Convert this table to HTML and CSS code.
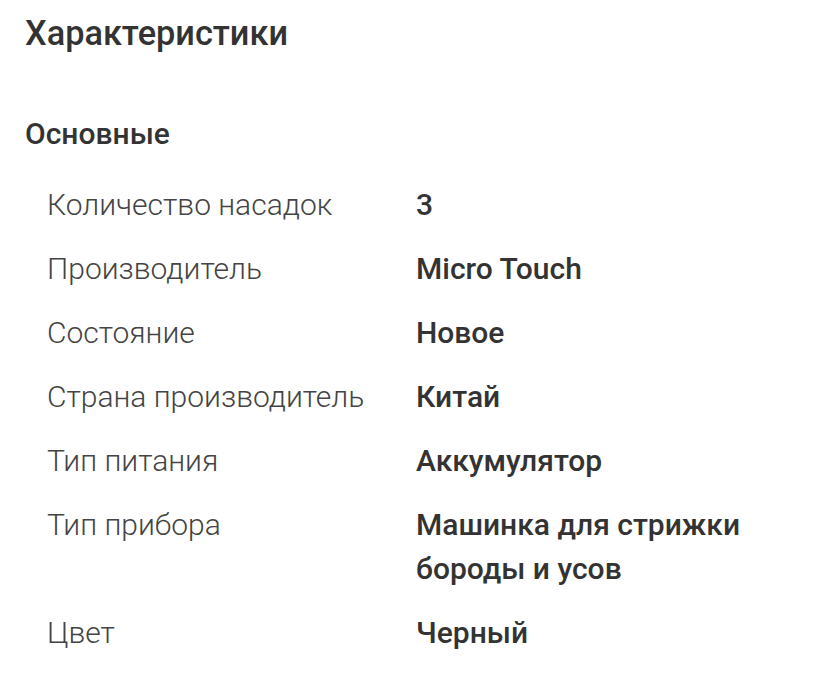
FILE: index.html
```html
<!DOCTYPE html>
<html lang="ru">
<head>
<meta charset="utf-8">
<link rel="stylesheet" href="styles.css">
</head>
<body>
<div class="page">
  <h1 class="title">Характеристики</h1>
  <h2 class="section">Основные</h2>
  <div class="specs">
    <div class="row"><div class="label">Количество насадок</div><div class="value">3</div></div>
    <div class="row"><div class="label">Производитель</div><div class="value">Micro Touch</div></div>
    <div class="row"><div class="label">Состояние</div><div class="value">Новое</div></div>
    <div class="row"><div class="label">Страна производитель</div><div class="value">Китай</div></div>
    <div class="row"><div class="label">Тип питания</div><div class="value">Аккумулятор</div></div>
    <div class="row"><div class="label">Тип прибора</div><div class="value">Машинка для стрижки бороды и усов</div></div>
    <div class="row"><div class="label">Цвет</div><div class="value">Черный</div></div>
  </div>
</div>
</body>
</html>
```
FILE: styles.css
```css
html, body {
  margin: 0;
  padding: 0;
  background: #fff;
}
.page {
  font-family: Roboto, "Noto Sans", sans-serif;
  color: #333;
  padding: 13px 20px 0 25px;
}
.title {
  margin: 0;
  font-size: 34.3px;
  line-height: 40px;
  font-weight: 500;
  color: #333;
}
.section {
  margin: 63px 0 0;
  font-size: 30px;
  line-height: 36px;
  font-weight: 500;
  color: #333;
}
.specs {
  display: flex;
  flex-direction: column;
  gap: 20px;
  margin-top: 31px;
  padding-left: 22px;
}
.row {
  display: grid;
  grid-template-columns: 369px 1fr;
  font-size: 30px;
  line-height: 44px;
}
.label {
  font-weight: 300;
  color: #444;
}
.value {
  font-weight: 500;
  color: #333;
  max-width: 350px;
}
```
